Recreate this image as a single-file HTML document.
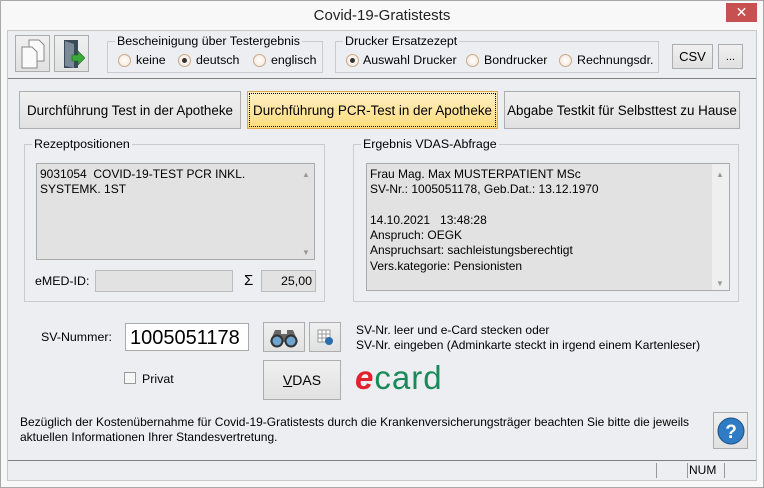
<!DOCTYPE html>
<html><head><meta charset="utf-8"><style>
*{box-sizing:border-box;margin:0;padding:0}
body{width:764px;height:488px;background:#f8f8f8;font-family:"Liberation Sans",sans-serif;font-size:12.4px;color:#000;position:relative;overflow:hidden}
.a{position:absolute}
.frame{left:0;top:0;width:764px;height:488px;border:1px solid #a8a8a8}
.client{left:7px;top:30px;width:750px;height:451px;background:#edeef1;border:1px solid #c8c8c8}
.btn{position:absolute;background:linear-gradient(#f0f0f0,#e1e1e1);border:1px solid #adadad;display:flex;align-items:center;justify-content:center}
.grp{position:absolute;border:1px solid #c8cbd0}
.grp>.lbl{position:absolute;left:7px;top:-8px;background:#edeef1;padding:0 2px;line-height:14px}
.rad{position:absolute;width:13px;height:13px;border-radius:50%;border:1px solid #c9a98a;background:radial-gradient(#fff,#f2e4d5)}
.rad.on::after{content:"";position:absolute;left:3px;top:3px;width:5px;height:5px;border-radius:50%;background:#333}
.t{position:absolute;white-space:nowrap;line-height:15px}
.list{position:absolute;background:#e2e2e2;border:1px solid #aaa;padding:3px 0 0 3px;line-height:15.3px;font-size:12px}
.field{position:absolute;background:#e2e2e2;border:1px solid #bbb}
</style></head><body>
<div class="a frame"></div>
<div class="t" style="left:0;width:764px;text-align:center;top:8px;font-size:15px;color:#222">Covid-19-Gratistests</div>
<div class="a" style="left:726px;top:3px;width:31px;height:19px;background:#c75050;color:#fff;text-align:center;font-size:14px;line-height:19px">✕</div>
<div class="a client"></div>

<div class="btn" style="left:15px;top:35px;width:35px;height:37px">
<svg width="26" height="30"><path d="M9 1h10l5 5v16H9z" fill="#fafafa" stroke="#888"/><path d="M2 8h10l5 5v16H2z" fill="#fafafa" stroke="#888"/></svg></div>
<div class="btn" style="left:54px;top:35px;width:35px;height:37px">
<svg width="26" height="32"><path d="M5 2h14v28H5z" fill="#3a4a58"/><path d="M6 3l9 3v24l-9-2z" fill="#7c8a98"/><path d="M13 17h6v-4l7 7-7 7v-4h-6z" fill="#3aa83a" stroke="#1d6d1d" stroke-width=".6"/></svg></div>

<div class="grp" style="left:107px;top:41px;width:216px;height:32px"><span class="lbl">Bescheinigung über Testergebnis</span></div>
<div class="rad" style="left:118px;top:54px"></div><div class="t" style="left:136px;top:53px">keine</div>
<div class="rad on" style="left:178px;top:54px"></div><div class="t" style="left:196px;top:53px">deutsch</div>
<div class="rad" style="left:253px;top:54px"></div><div class="t" style="left:271px;top:53px">englisch</div>

<div class="grp" style="left:335px;top:41px;width:324px;height:32px"><span class="lbl">Drucker Ersatzezept</span></div>
<div class="rad on" style="left:346px;top:54px"></div><div class="t" style="left:363px;top:53px">Auswahl Drucker</div>
<div class="rad" style="left:466px;top:54px"></div><div class="t" style="left:484px;top:53px">Bondrucker</div>
<div class="rad" style="left:559px;top:54px"></div><div class="t" style="left:577px;top:53px">Rechnungsdr.</div>

<div class="btn" style="left:672px;top:44px;width:41px;height:25px;font-size:13px">CSV</div>
<div class="btn" style="left:718px;top:44px;width:25px;height:25px;font-size:11px">...</div>

<div class="a" style="left:8px;top:78px;width:748px;height:1px;background:#808080"></div>

<div class="btn" style="left:19px;top:91px;width:222px;height:38px;font-size:13.4px">Durchführung Test in der Apotheke</div>
<div class="btn" style="left:247px;top:91px;width:251px;height:38px;font-size:13.4px;background:linear-gradient(#fff0c4,#fddc7c);border-color:#e0a84a;outline:1px dotted #000;outline-offset:-3px">Durchführung PCR-Test in der Apotheke</div>
<div class="btn" style="left:504px;top:91px;width:236px;height:38px;font-size:13.4px">Abgabe Testkit für Selbsttest zu Hause</div>

<div class="grp" style="left:24px;top:144px;width:301px;height:158px"><span class="lbl">Rezeptpositionen</span></div>
<div class="list" style="left:36px;top:163px;width:279px;height:97px">9031054&nbsp; COVID-19-TEST PCR INKL.<br>SYSTEMK. 1ST</div>
<div class="t" style="left:302px;top:167px;font-size:8px;color:#999">▲</div><div class="t" style="left:302px;top:245px;font-size:8px;color:#999">▼</div>
<div class="t" style="left:35px;top:274px">eMED-ID:</div>
<div class="field" style="left:95px;top:270px;width:138px;height:22px"></div>
<div class="t" style="left:244px;top:273px;font-size:15px">Σ</div>
<div class="field" style="left:261px;top:270px;width:55px;height:22px;text-align:right;padding:3px 3px 0 0">25,00</div>

<div class="grp" style="left:353px;top:144px;width:386px;height:158px"><span class="lbl">Ergebnis VDAS-Abfrage</span></div>
<div class="list" style="left:366px;top:163px;width:364px;height:128px;padding-top:3px;padding-left:3px">Frau Mag. Max MUSTERPATIENT MSc<br>SV-Nr.: 1005051178, Geb.Dat.: 13.12.1970<br><br>14.10.2021&nbsp;&nbsp; 13:48:28<br>Anspruch: OEGK<br>Anspruchsart: sachleistungsberechtigt<br>Vers.kategorie: Pensionisten</div>
<div class="a" style="left:712px;top:164px;width:17px;height:126px;background:#efefef"></div>
<div class="t" style="left:716px;top:167px;font-size:8px;color:#999">▲</div><div class="t" style="left:716px;top:276px;font-size:8px;color:#999">▼</div>

<div class="t" style="left:41px;top:330px">SV-Nummer:</div>
<div class="a" style="left:125px;top:323px;width:124px;height:28px;background:#fff;border:1px solid #aaa;font-size:20px;padding:3px 0 0 4px">1005051178</div>
<div class="btn" style="left:263px;top:322px;width:42px;height:30px">
<svg width="30" height="22"><path d="M6 4h6v4h6V4h6l5 12H1z" fill="#666"/><circle cx="8" cy="15" r="6.5" fill="#333"/><circle cx="22" cy="15" r="6.5" fill="#333"/><circle cx="8" cy="15" r="4.5" fill="#6fa4cf"/><circle cx="22" cy="15" r="4.5" fill="#6fa4cf"/></svg></div>
<div class="btn" style="left:309px;top:322px;width:32px;height:30px">
<svg width="16" height="16"><path d="M1 1h12v12H1zM1 5h12M1 9h12M5 1v12M9 1v12" fill="#fff" stroke="#999"/><circle cx="12" cy="12" r="4" fill="#2a6db0"/></svg></div>
<div class="t" style="left:356px;top:323px;font-size:12px">SV-Nr. leer und e-Card stecken oder</div>
<div class="t" style="left:356px;top:338px;font-size:12px">SV-Nr. eingeben (Adminkarte steckt in irgend einem Kartenleser)</div>

<div class="a" style="left:124px;top:372px;width:12px;height:12px;border:1px solid #999;background:#f6f6f6"></div>
<div class="t" style="left:142px;top:372px">Privat</div>
<div class="btn" style="left:263px;top:360px;width:78px;height:40px;font-size:14px"><u>V</u>DAS</div>
<div class="t" style="left:355px;top:360px;font-size:33px;line-height:36px;letter-spacing:1px"><span style="color:#e0222f;font-style:italic;font-weight:bold">e</span><span style="color:#1a8a5a">card</span></div>

<div class="t" style="left:20px;top:415px;font-size:12px">Bezüglich der Kostenübernahme für Covid-19-Gratistests durch die Krankenversicherungsträger beachten Sie bitte die jeweils</div>
<div class="t" style="left:20px;top:430px;font-size:12px">aktuellen Informationen Ihrer Standesvertretung.</div>
<div class="btn" style="left:713px;top:412px;width:35px;height:37px">
<svg width="28" height="28"><circle cx="14" cy="14" r="13" fill="#2f7bc4" stroke="#1b4f85"/><text x="14" y="21" font-family="Liberation Sans" font-weight="bold" font-size="19" fill="#fff" text-anchor="middle">?</text></svg></div>

<div class="a" style="left:8px;top:460px;width:748px;height:1px;background:#808080"></div>
<div class="a" style="left:656px;top:463px;width:1px;height:15px;background:#999"></div>
<div class="a" style="left:687px;top:463px;width:1px;height:15px;background:#999"></div>
<div class="a" style="left:724px;top:463px;width:1px;height:15px;background:#999"></div>
<div class="t" style="left:689px;top:463px;font-size:12px">NUM</div>
</body></html>
